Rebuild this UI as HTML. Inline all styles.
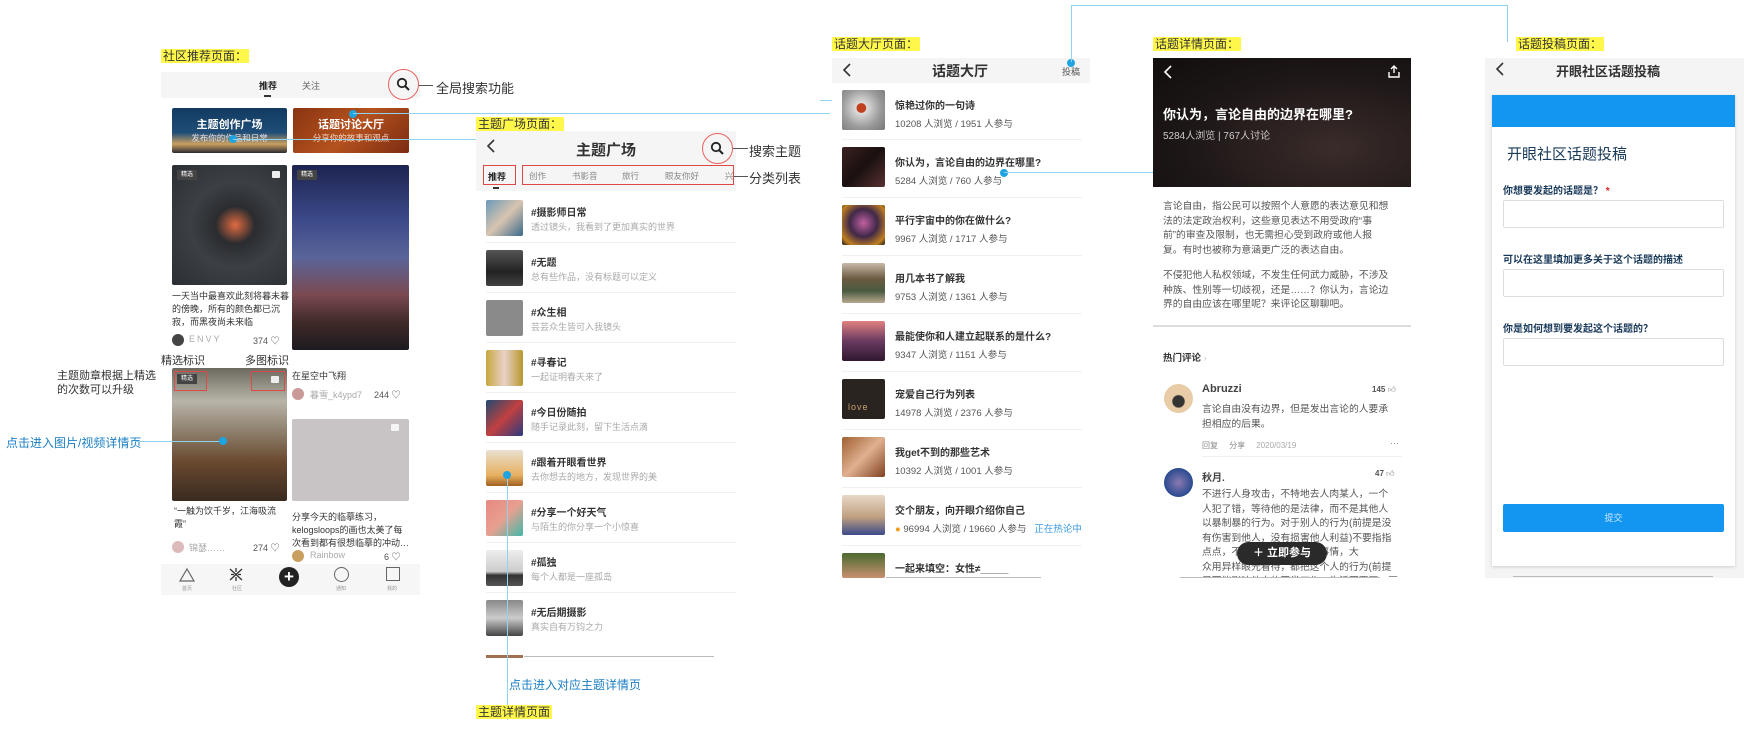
<!DOCTYPE html>
<html><head><meta charset="utf-8">
<style>
*{margin:0;padding:0;box-sizing:border-box}
body{width:1744px;height:729px;background:#fff;position:relative;overflow:hidden;font-family:"Liberation Sans","Noto Sans CJK SC",sans-serif;color:#222}
.a{position:absolute}
.lbl{position:absolute;background:#fff84a;font-size:12px;padding:0 2px;line-height:14px;color:#333}
.note{position:absolute;font-size:12px;color:#333;white-space:nowrap}
.blue{color:#1a7fc4}
.ln{position:absolute;background:#8fd3ef}
.dot{position:absolute;width:8px;height:8px;border-radius:50%;background:#1ea4e0}
.t{position:absolute;white-space:nowrap}
.img{position:absolute;border-radius:2px}
.rbox{position:absolute;border:1px solid #e04848}
.rc{position:absolute;border:1px solid #e86060;border-radius:50%}
.li .ti{font-size:10px;font-weight:bold;color:#333}
.sub{font-size:9px;color:#aaa}
.hr{position:absolute;height:1px;background:#f0f0f0}
.s3{font-size:9.5px;color:#555}
</style></head><body>

<!-- ===== Screen 1 ===== -->
<div class="lbl" style="left:161px;top:49px">社区推荐页面：</div>
<div class="a" style="left:161px;top:72px;width:259px;height:26px;background:#f6f5f5"></div>
<div class="t" style="left:259px;top:79px;font-size:9px;font-weight:bold">推荐</div>
<div class="a" style="left:264px;top:95px;width:7px;height:2px;background:#333"></div>
<div class="t" style="left:302px;top:79px;font-size:9px;color:#666">关注</div>
<div class="rc" style="left:388px;top:69px;width:31px;height:31px"></div>
<svg class="a" style="left:396px;top:77px" width="15" height="15" viewBox="0 0 15 15"><circle cx="6" cy="6" r="4.2" fill="none" stroke="#222" stroke-width="1.8"/><path d="M9 9l4 4" stroke="#222" stroke-width="2"/></svg>
<div class="a" style="left:419px;top:85px;width:14px;height:1px;background:#555"></div>
<div class="note" style="left:436px;top:78px;font-size:13px">全局搜索功能</div>

<div class="img" style="left:172px;top:108px;width:115px;height:45px;background:linear-gradient(180deg,#123a60 0%,#1f4e78 55%,#caa060 80%,#2a2a30 100%)"></div>
<div class="t" style="left:172px;top:116px;width:115px;text-align:center;color:#fff;font-size:11px;font-weight:bold">主题创作广场</div>
<div class="t" style="left:172px;top:132px;width:115px;text-align:center;color:#dde;font-size:8.5px">发布你的作品和日常</div>
<div class="img" style="left:293px;top:108px;width:116px;height:45px;background:linear-gradient(135deg,#8a3412,#b4521e 50%,#7c2c12)"></div>
<div class="t" style="left:293px;top:116px;width:116px;text-align:center;color:#fff;font-size:11px;font-weight:bold">话题讨论大厅</div>
<div class="t" style="left:293px;top:132px;width:116px;text-align:center;color:#f4d0c0;font-size:8.5px">分享你的故事和观点</div>

<div class="img" style="left:172px;top:165px;width:115px;height:120px;background:radial-gradient(ellipse at 55% 50%,#e06a40 0%,#2a2c30 22%,#3c4044 50%,#2b2f33 100%)"></div>
<div class="a" style="left:177px;top:170px;width:20px;height:10px;background:#444;color:#fff;font-size:6px;text-align:center;line-height:10px">精选</div>
<div class="a" style="left:272px;top:171px;width:8px;height:7px;background:#eee;border-radius:1px"></div>
<div class="img" style="left:292px;top:165px;width:117px;height:185px;background:linear-gradient(180deg,#1d2450 0%,#3c4a8a 30%,#5a6499 50%,#7a4a50 70%,#402a28 85%,#1c1a20 100%)"></div>
<div class="a" style="left:297px;top:170px;width:20px;height:10px;background:#444;color:#fff;font-size:6px;text-align:center;line-height:10px">精选</div>
<div class="t" style="left:172px;top:290px;font-size:9px;color:#333;line-height:13px">一天当中最喜欢此刻将暮未暮<br>的傍晚，所有的颜色都已沉<br>寂，而黑夜尚未来临</div>
<div class="a" style="left:172px;top:334px;width:12px;height:12px;border-radius:50%;background:#444"></div>
<div class="t" style="left:189px;top:334px;font-size:9px;color:#aaa;letter-spacing:2px">ENVY</div>
<div class="t" style="left:253px;top:334px;font-size:9px;color:#555">374 ♡</div>
<div class="note" style="left:161px;top:352px;font-size:11px">精选标识</div>
<div class="note" style="left:245px;top:352px;font-size:11px">多图标识</div>
<div class="note" style="left:57px;top:369px;font-size:11px;line-height:14px">主题勋章根据上精选<br>的次数可以升级</div>

<div class="img" style="left:172px;top:368px;width:115px;height:133px;background:linear-gradient(180deg,#6c6a60 0%,#b8b4a8 25%,#8a7a66 50%,#6a4a30 70%,#3a2a20 100%)"></div>
<div class="rbox" style="left:174px;top:371px;width:33px;height:20px"></div>
<div class="a" style="left:177px;top:374px;width:20px;height:10px;background:#444;color:#fff;font-size:6px;text-align:center;line-height:10px">精选</div>
<div class="rbox" style="left:251px;top:371px;width:34px;height:20px"></div>
<div class="a" style="left:271px;top:376px;width:8px;height:7px;background:#eee;border-radius:1px"></div>
<div class="t" style="left:292px;top:369px;font-size:9px;color:#333">在星空中飞翔</div>
<div class="a" style="left:292px;top:388px;width:12px;height:12px;border-radius:50%;background:#c99"></div>
<div class="t" style="left:310px;top:388px;font-size:9px;color:#aaa">暮雪_k4ypd7</div>
<div class="t" style="left:374px;top:388px;font-size:9px;color:#555">244 ♡</div>
<div class="img" style="left:292px;top:419px;width:117px;height:82px;background:#c8c4c6"></div>
<div class="a" style="left:391px;top:424px;width:8px;height:7px;background:#f5f5f5;border-radius:1px"></div>
<div class="t" style="left:174px;top:505px;font-size:9px;color:#333;line-height:13px">“一触为饮千岁，江海吸流<br>霞”</div>
<div class="a" style="left:172px;top:541px;width:12px;height:12px;border-radius:50%;background:#dbb"></div>
<div class="t" style="left:189px;top:541px;font-size:9px;color:#aaa">锦瑟……</div>
<div class="t" style="left:253px;top:541px;font-size:9px;color:#555">274 ♡</div>
<div class="t" style="left:292px;top:511px;font-size:9px;color:#333;line-height:13px">分享今天的临摹练习，<br>kelogsloops的画也太美了每<br>次看到都有很想临摹的冲动…</div>
<div class="a" style="left:292px;top:550px;width:12px;height:12px;border-radius:50%;background:#c9a060"></div>
<div class="t" style="left:310px;top:550px;font-size:9px;color:#aaa">Rainbow</div>
<div class="t" style="left:384px;top:550px;font-size:9px;color:#555">6 ♡</div>

<div class="a" style="left:161px;top:564px;width:259px;height:31px;background:#f7f6f6"></div>
<svg class="a" style="left:178px;top:567px" width="18" height="16"><path d="M9 2L16 14H2Z" fill="none" stroke="#666" stroke-width="1.2"/></svg>
<div class="t" style="left:182px;top:585px;font-size:5px;color:#999">首页</div>
<svg class="a" style="left:228px;top:567px" width="16" height="15"><path d="M2 2L14 13M14 2L2 13M8 1v4M8 10v4M3 7.5h3M10 7.5h3" stroke="#333" stroke-width="1.3" fill="none"/></svg>
<div class="t" style="left:232px;top:585px;font-size:5px;color:#999">社区</div>
<div class="a" style="left:279px;top:567px;width:20px;height:20px;border-radius:50%;background:#222;color:#fff;font-size:17px;line-height:20px;text-align:center;font-weight:bold">+</div>
<div class="a" style="left:334px;top:567px;width:15px;height:15px;border:1.3px solid #666;border-radius:50%"></div>
<div class="t" style="left:336px;top:585px;font-size:5px;color:#999">通知</div>
<div class="a" style="left:386px;top:567px;width:14px;height:14px;border:1.3px solid #666"></div>
<div class="t" style="left:387px;top:585px;font-size:5px;color:#999">我的</div>

<div class="note blue" style="left:6px;top:434px;font-size:12px">点击进入图片/视频详情页</div>
<div class="ln" style="left:135px;top:441px;width:88px;height:1px"></div>
<div class="dot" style="left:219px;top:437px"></div>

<!-- connectors -->
<div class="dot" style="left:349px;top:110px"></div>
<div class="ln" style="left:353px;top:113px;width:477px;height:1px"></div>
<div class="dot" style="left:229px;top:135px"></div>
<div class="ln" style="left:233px;top:139px;width:245px;height:1px"></div>

<!-- ===== Screen 2 ===== -->
<div class="lbl" style="left:476px;top:117px">主题广场页面：</div>
<div class="a" style="left:476px;top:131px;width:260px;height:60px;background:#f6f5f5"></div>
<svg class="a" style="left:486px;top:138px" width="10" height="16"><path d="M8 2L2 8l6 6" fill="none" stroke="#333" stroke-width="1.6"/></svg>
<div class="t" style="left:576px;top:139px;font-size:15px;font-weight:bold;color:#333">主题广场</div>
<div class="rc" style="left:702px;top:133px;width:31px;height:31px"></div>
<svg class="a" style="left:710px;top:141px" width="15" height="15"><circle cx="6" cy="6" r="4.2" fill="none" stroke="#222" stroke-width="1.8"/><path d="M9 9l4 4" stroke="#222" stroke-width="2"/></svg>
<div class="a" style="left:733px;top:148px;width:15px;height:1px;background:#555"></div>
<div class="note" style="left:749px;top:141px;font-size:13px">搜索主题</div>
<div class="rbox" style="left:483px;top:165px;width:33px;height:20px"></div>
<div class="t" style="left:488px;top:170px;font-size:9px;font-weight:bold">推荐</div>
<div class="a" style="left:493px;top:187px;width:6px;height:2px;background:#333"></div>
<div class="rbox" style="left:522px;top:165px;width:212px;height:20px"></div>
<div class="t" style="left:529px;top:170px;font-size:8.5px;color:#888">创作</div>
<div class="t" style="left:572px;top:170px;font-size:8.5px;color:#888">书影音</div>
<div class="t" style="left:622px;top:170px;font-size:8.5px;color:#888">旅行</div>
<div class="t" style="left:665px;top:170px;font-size:8.5px;color:#888">眼友你好</div>
<div class="t" style="left:725px;top:170px;font-size:8.5px;color:#888">兴</div>
<div class="a" style="left:734px;top:176px;width:14px;height:1px;background:#555"></div>
<div class="note" style="left:749px;top:168px;font-size:13px">分类列表</div>

<div class="li">
<div class="img" style="left:486px;top:200px;width:37px;height:36px;background:linear-gradient(135deg,#6a9ab8,#d8c4b0,#3a6a8a)"></div>
<div class="t ti" style="left:531px;top:204px">#摄影师日常</div><div class="t sub" style="left:531px;top:220px">透过镜头，我看到了更加真实的世界</div>
<div class="hr" style="left:486px;top:242px;width:250px"></div>
<div class="img" style="left:486px;top:250px;width:37px;height:36px;background:linear-gradient(180deg,#555,#222 60%,#444)"></div>
<div class="t ti" style="left:531px;top:254px">#无题</div><div class="t sub" style="left:531px;top:270px">总有些作品，没有标题可以定义</div>
<div class="hr" style="left:486px;top:292px;width:250px"></div>
<div class="img" style="left:486px;top:300px;width:37px;height:36px;background:#8a8a8a"></div>
<div class="t ti" style="left:531px;top:304px">#众生相</div><div class="t sub" style="left:531px;top:320px">芸芸众生皆可入我镜头</div>
<div class="hr" style="left:486px;top:342px;width:250px"></div>
<div class="img" style="left:486px;top:350px;width:37px;height:36px;background:linear-gradient(90deg,#c8a840,#e8d0c8,#b8982c)"></div>
<div class="t ti" style="left:531px;top:354px">#寻春记</div><div class="t sub" style="left:531px;top:370px">一起证明春天来了</div>
<div class="hr" style="left:486px;top:392px;width:250px"></div>
<div class="img" style="left:486px;top:400px;width:37px;height:36px;background:linear-gradient(135deg,#204a70,#c04040,#2a3a80)"></div>
<div class="t ti" style="left:531px;top:404px">#今日份随拍</div><div class="t sub" style="left:531px;top:420px">随手记录此刻，留下生活点滴</div>
<div class="hr" style="left:486px;top:442px;width:250px"></div>
<div class="img" style="left:486px;top:450px;width:37px;height:36px;background:linear-gradient(180deg,#e8e0d0,#e8b060 70%,#a06020)"></div>
<div class="t ti" style="left:531px;top:454px">#跟着开眼看世界</div><div class="t sub" style="left:531px;top:470px">去你想去的地方，发现世界的美</div>
<div class="hr" style="left:486px;top:492px;width:250px"></div>
<div class="img" style="left:486px;top:500px;width:37px;height:36px;background:linear-gradient(135deg,#e88880,#e8a090 50%,#40b8a8)"></div>
<div class="t ti" style="left:531px;top:504px">#分享一个好天气</div><div class="t sub" style="left:531px;top:520px">与陌生的你分享一个小惊喜</div>
<div class="hr" style="left:486px;top:542px;width:250px"></div>
<div class="img" style="left:486px;top:550px;width:37px;height:36px;background:linear-gradient(180deg,#eee,#ccc 60%,#333 70%,#555)"></div>
<div class="t ti" style="left:531px;top:554px">#孤独</div><div class="t sub" style="left:531px;top:570px">每个人都是一座孤岛</div>
<div class="hr" style="left:486px;top:592px;width:250px"></div>
<div class="img" style="left:486px;top:600px;width:37px;height:36px;background:linear-gradient(180deg,#888,#ccc 50%,#444)"></div>
<div class="t ti" style="left:531px;top:604px">#无后期摄影</div><div class="t sub" style="left:531px;top:620px">真实自有万钧之力</div>
<div class="a" style="left:486px;top:655px;width:37px;height:3px;background:#a07050"></div>
<div class="a" style="left:524px;top:656px;width:190px;height:1px;background:#bbb"></div>
</div>
<div class="ln" style="left:507px;top:475px;width:1px;height:245px"></div>
<div class="dot" style="left:503px;top:471px"></div>
<div class="note blue" style="left:509px;top:676px;font-size:12px">点击进入对应主题详情页</div>
<div class="lbl" style="left:476px;top:705px">主题详情页面</div>

<!-- ===== Screen 3 ===== -->
<div class="lbl" style="left:832px;top:37px">话题大厅页面：</div>
<div class="a" style="left:832px;top:58px;width:258px;height:25px;background:#f6f5f5"></div>
<svg class="a" style="left:842px;top:62px" width="10" height="16"><path d="M8 2L2 8l6 6" fill="none" stroke="#333" stroke-width="1.6"/></svg>
<div class="t" style="left:932px;top:61px;font-size:14px;font-weight:bold;color:#333">话题大厅</div>
<div class="t" style="left:1062px;top:65px;font-size:9px;color:#555">投稿</div>
<div class="dot" style="left:1067px;top:59px"></div>
<div class="ln" style="left:1071px;top:6px;width:1px;height:56px"></div>
<div class="ln" style="left:1071px;top:5px;width:437px;height:1px"></div>
<div class="ln" style="left:1507px;top:5px;width:1px;height:37px"></div>
<div class="ln" style="left:820px;top:100px;width:12px;height:1px"></div>

<div class="li">
<div class="img" style="left:842px;top:90px;width:43px;height:40px;background:radial-gradient(circle at 45% 45%,#c04020 0 14%,#ddd 16%,#9a9a9a 60%,#777)"></div>
<div class="t ti" style="left:895px;top:97px">惊艳过你的一句诗</div><div class="t s3" style="left:895px;top:116px">10208 人浏览 / 1951 人参与</div>
<div class="hr" style="left:842px;top:139px;width:240px"></div>
<div class="img" style="left:842px;top:147px;width:43px;height:40px;background:linear-gradient(135deg,#3a2020,#1a1010 50%,#5a3030)"></div>
<div class="t ti" style="left:895px;top:154px">你认为，言论自由的边界在哪里?</div><div class="t s3" style="left:895px;top:173px">5284 人浏览 / 760 人参与</div>
<div class="hr" style="left:842px;top:197px;width:240px"></div>
<div class="img" style="left:842px;top:205px;width:43px;height:40px;background:radial-gradient(circle at 50% 45%,#c060a0,#402848 45%,#c08020 80%,#201818)"></div>
<div class="t ti" style="left:895px;top:212px">平行宇宙中的你在做什么?</div><div class="t s3" style="left:895px;top:231px">9967 人浏览 / 1717 人参与</div>
<div class="hr" style="left:842px;top:255px;width:240px"></div>
<div class="img" style="left:842px;top:263px;width:43px;height:40px;background:linear-gradient(180deg,#c8b8a8,#6a5a40 40%,#4a5a40 70%,#b8a890)"></div>
<div class="t ti" style="left:895px;top:270px">用几本书了解我</div><div class="t s3" style="left:895px;top:289px">9753 人浏览 / 1361 人参与</div>
<div class="hr" style="left:842px;top:313px;width:240px"></div>
<div class="img" style="left:842px;top:321px;width:43px;height:40px;background:linear-gradient(180deg,#e08080,#6a3a60 50%,#301830)"></div>
<div class="t ti" style="left:895px;top:328px">最能使你和人建立起联系的是什么?</div><div class="t s3" style="left:895px;top:347px">9347 人浏览 / 1151 人参与</div>
<div class="hr" style="left:842px;top:371px;width:240px"></div>
<div class="img" style="left:842px;top:379px;width:43px;height:40px;background:#2a2420"></div>
<div class="t" style="left:848px;top:402px;font-size:9px;color:#c8a070;letter-spacing:1px">love</div>
<div class="t ti" style="left:895px;top:386px">宠爱自己行为列表</div><div class="t s3" style="left:895px;top:405px">14978 人浏览 / 2376 人参与</div>
<div class="hr" style="left:842px;top:429px;width:240px"></div>
<div class="img" style="left:842px;top:437px;width:43px;height:40px;background:linear-gradient(135deg,#a06030,#e0b090 50%,#804020)"></div>
<div class="t ti" style="left:895px;top:444px">我get不到的那些艺术</div><div class="t s3" style="left:895px;top:463px">10392 人浏览 / 1001 人参与</div>
<div class="hr" style="left:842px;top:487px;width:240px"></div>
<div class="img" style="left:842px;top:495px;width:43px;height:40px;background:linear-gradient(180deg,#e8d8c8,#c0a080 55%,#3a4a8a)"></div>
<div class="t ti" style="left:895px;top:502px">交个朋友，向开眼介绍你自己</div><div class="t s3" style="left:895px;top:521px"><span style="color:#f0a020">●</span> 96994 人浏览 / 19660 人参与 &nbsp;&nbsp;<span style="color:#3a9ae0">正在热论中</span></div>
<div class="hr" style="left:842px;top:545px;width:240px"></div>
<div class="img" style="left:842px;top:553px;width:43px;height:25px;background:linear-gradient(180deg,#4a6a30,#c89070)"></div>
<div class="t ti" style="left:895px;top:560px">一起来填空：女性≠_____</div>
<div class="a" style="left:886px;top:577px;width:155px;height:1px;background:#bbb"></div>
</div>
<div class="dot" style="left:1000px;top:169px"></div>
<div class="ln" style="left:1004px;top:172px;width:149px;height:1px"></div>

<!-- ===== Screen 4 ===== -->
<div class="lbl" style="left:1153px;top:37px">话题详情页面：</div>
<div class="a" style="left:1153px;top:58px;width:258px;height:129px;background:radial-gradient(ellipse at 70% 70%,#3a2c2a,#1c1616 60%,#120e0e)"></div>
<svg class="a" style="left:1163px;top:64px" width="10" height="16"><path d="M8 2L2 8l6 6" fill="none" stroke="#fff" stroke-width="1.6"/></svg>
<svg class="a" style="left:1388px;top:64px" width="12" height="14"><path d="M6 9V2M3 5l3-3 3 3M1 8v5h10V8" fill="none" stroke="#fff" stroke-width="1.4"/></svg>
<div class="t" style="left:1163px;top:104px;font-size:13px;font-weight:bold;color:#fff">你认为，言论自由的边界在哪里?</div>
<div class="t" style="left:1163px;top:127px;font-size:10px;color:#ccc">5284人浏览 | 767人讨论</div>
<div class="t" style="left:1163px;top:200px;font-size:9.8px;color:#555;line-height:14.5px">言论自由，指公民可以按照个人意愿的表达意见和想<br>法的法定政治权利，这些意见表达不用受政府“事<br>前”的审查及限制，也无需担心受到政府或他人报<br>复。有时也被称为意涵更广泛的表达自由。</div>
<div class="t" style="left:1163px;top:269px;font-size:9.8px;color:#555;line-height:14.5px">不侵犯他人私权领域，不发生任何武力威胁，不涉及<br>种族、性别等一切歧视，还是……？你认为，言论边<br>界的自由应该在哪里呢？来评论区聊聊吧。</div>
<div class="a" style="left:1153px;top:325px;width:258px;height:2px;background:#ddd"></div>
<div class="t" style="left:1163px;top:350px;font-size:9.5px;font-weight:bold;color:#333">热门评论 <span style="color:#ccc;font-weight:normal">›</span></div>
<div class="a" style="left:1164px;top:384px;width:29px;height:29px;border-radius:50%;background:radial-gradient(circle at 50% 60%,#333 0 25%,#e8cca8 30%)"></div>
<div class="t" style="left:1202px;top:383px;font-size:11px;font-weight:bold;color:#444">Abruzzi</div>
<div class="t" style="left:1372px;top:385px;font-size:8px;font-weight:bold;color:#555">145 <span style="color:#bbb">👍︎</span></div>
<div class="t" style="left:1202px;top:403px;font-size:9.8px;color:#555;line-height:14.5px">言论自由没有边界，但是发出言论的人要承<br>担相应的后果。</div>
<div class="t" style="left:1202px;top:440px;font-size:8px;color:#888">回复 &nbsp;&nbsp;&nbsp;&nbsp;分享 &nbsp;&nbsp;&nbsp;&nbsp;<span style="color:#aaa">2020/03/19</span></div>
<div class="t" style="left:1390px;top:438px;font-size:9px;color:#888">···</div>
<div class="hr" style="left:1202px;top:456px;width:200px"></div>
<div class="a" style="left:1164px;top:468px;width:29px;height:29px;border-radius:50%;background:radial-gradient(circle at 50% 50%,#8a7ab0,#2a4a90 70%)"></div>
<div class="t" style="left:1202px;top:469px;font-size:10px;font-weight:bold;color:#444">秋月.</div>
<div class="t" style="left:1375px;top:469px;font-size:8px;font-weight:bold;color:#555">47 <span style="color:#bbb">👍︎</span></div>
<div class="t" style="left:1202px;top:488px;font-size:9.8px;color:#555;line-height:14.5px">不进行人身攻击，不特地去人肉某人，一个<br>人犯了错，等待他的是法律，而不是其他人<br>以暴制暴的行为。对于别人的行为(前提是没<br>有伤害到他人，没有损害他人利益)不要指指<br>点点，不要过分关注别人的事情，大<br>众用异样眼光看待，都把这个人的行为(前提<br>是不能影响他人的正常工作、生活不要再一再</div>
<div class="a" style="left:1153px;top:577px;width:258px;height:20px;background:#fff"></div>
<div class="a" style="left:1237px;top:542px;width:90px;height:23px;border-radius:12px;background:#2a2a2a;color:#fff;font-size:11px;font-weight:bold;line-height:23px;text-align:center">＋ 立即参与</div>
<div class="a" style="left:1180px;top:577px;width:200px;height:1px;background:#bbb"></div>

<!-- ===== Screen 5 ===== -->
<div class="lbl" style="left:1516px;top:37px">话题投稿页面：</div>
<div class="a" style="left:1485px;top:58px;width:259px;height:520px;background:#f4f4f4"></div>
<svg class="a" style="left:1495px;top:61px" width="10" height="16"><path d="M8 2L2 8l6 6" fill="none" stroke="#333" stroke-width="1.6"/></svg>
<div class="t" style="left:1556px;top:61px;font-size:13px;font-weight:bold;color:#333">开眼社区话题投稿</div>
<div class="a" style="left:1492px;top:95px;width:243px;height:471px;background:#fff;box-shadow:0 1px 3px #ccc"></div>
<div class="a" style="left:1492px;top:95px;width:243px;height:32px;background:#1296f0"></div>
<div class="t" style="left:1507px;top:143px;font-size:15px;color:#1a3a5a">开眼社区话题投稿</div>
<div class="t" style="left:1503px;top:182px;font-size:10px;font-weight:bold;color:#1a3a5a">你想要发起的话题是？ <span style="color:#e02020">*</span></div>
<div class="a" style="left:1503px;top:200px;width:221px;height:28px;border:1px solid #ddd;border-radius:2px"></div>
<div class="t" style="left:1503px;top:251px;font-size:10px;font-weight:bold;color:#1a3a5a">可以在这里填加更多关于这个话题的描述</div>
<div class="a" style="left:1503px;top:269px;width:221px;height:28px;border:1px solid #ddd;border-radius:2px"></div>
<div class="t" style="left:1503px;top:320px;font-size:10px;font-weight:bold;color:#1a3a5a">你是如何想到要发起这个话题的？</div>
<div class="a" style="left:1503px;top:338px;width:221px;height:28px;border:1px solid #ddd;border-radius:2px"></div>
<div class="a" style="left:1503px;top:504px;width:221px;height:28px;background:#1296f0;border-radius:2px;color:#cfe8ff;font-size:9px;text-align:center;line-height:28px">提交</div>
<div class="a" style="left:1513px;top:576px;width:200px;height:1px;background:#bbb"></div>
</body></html>
